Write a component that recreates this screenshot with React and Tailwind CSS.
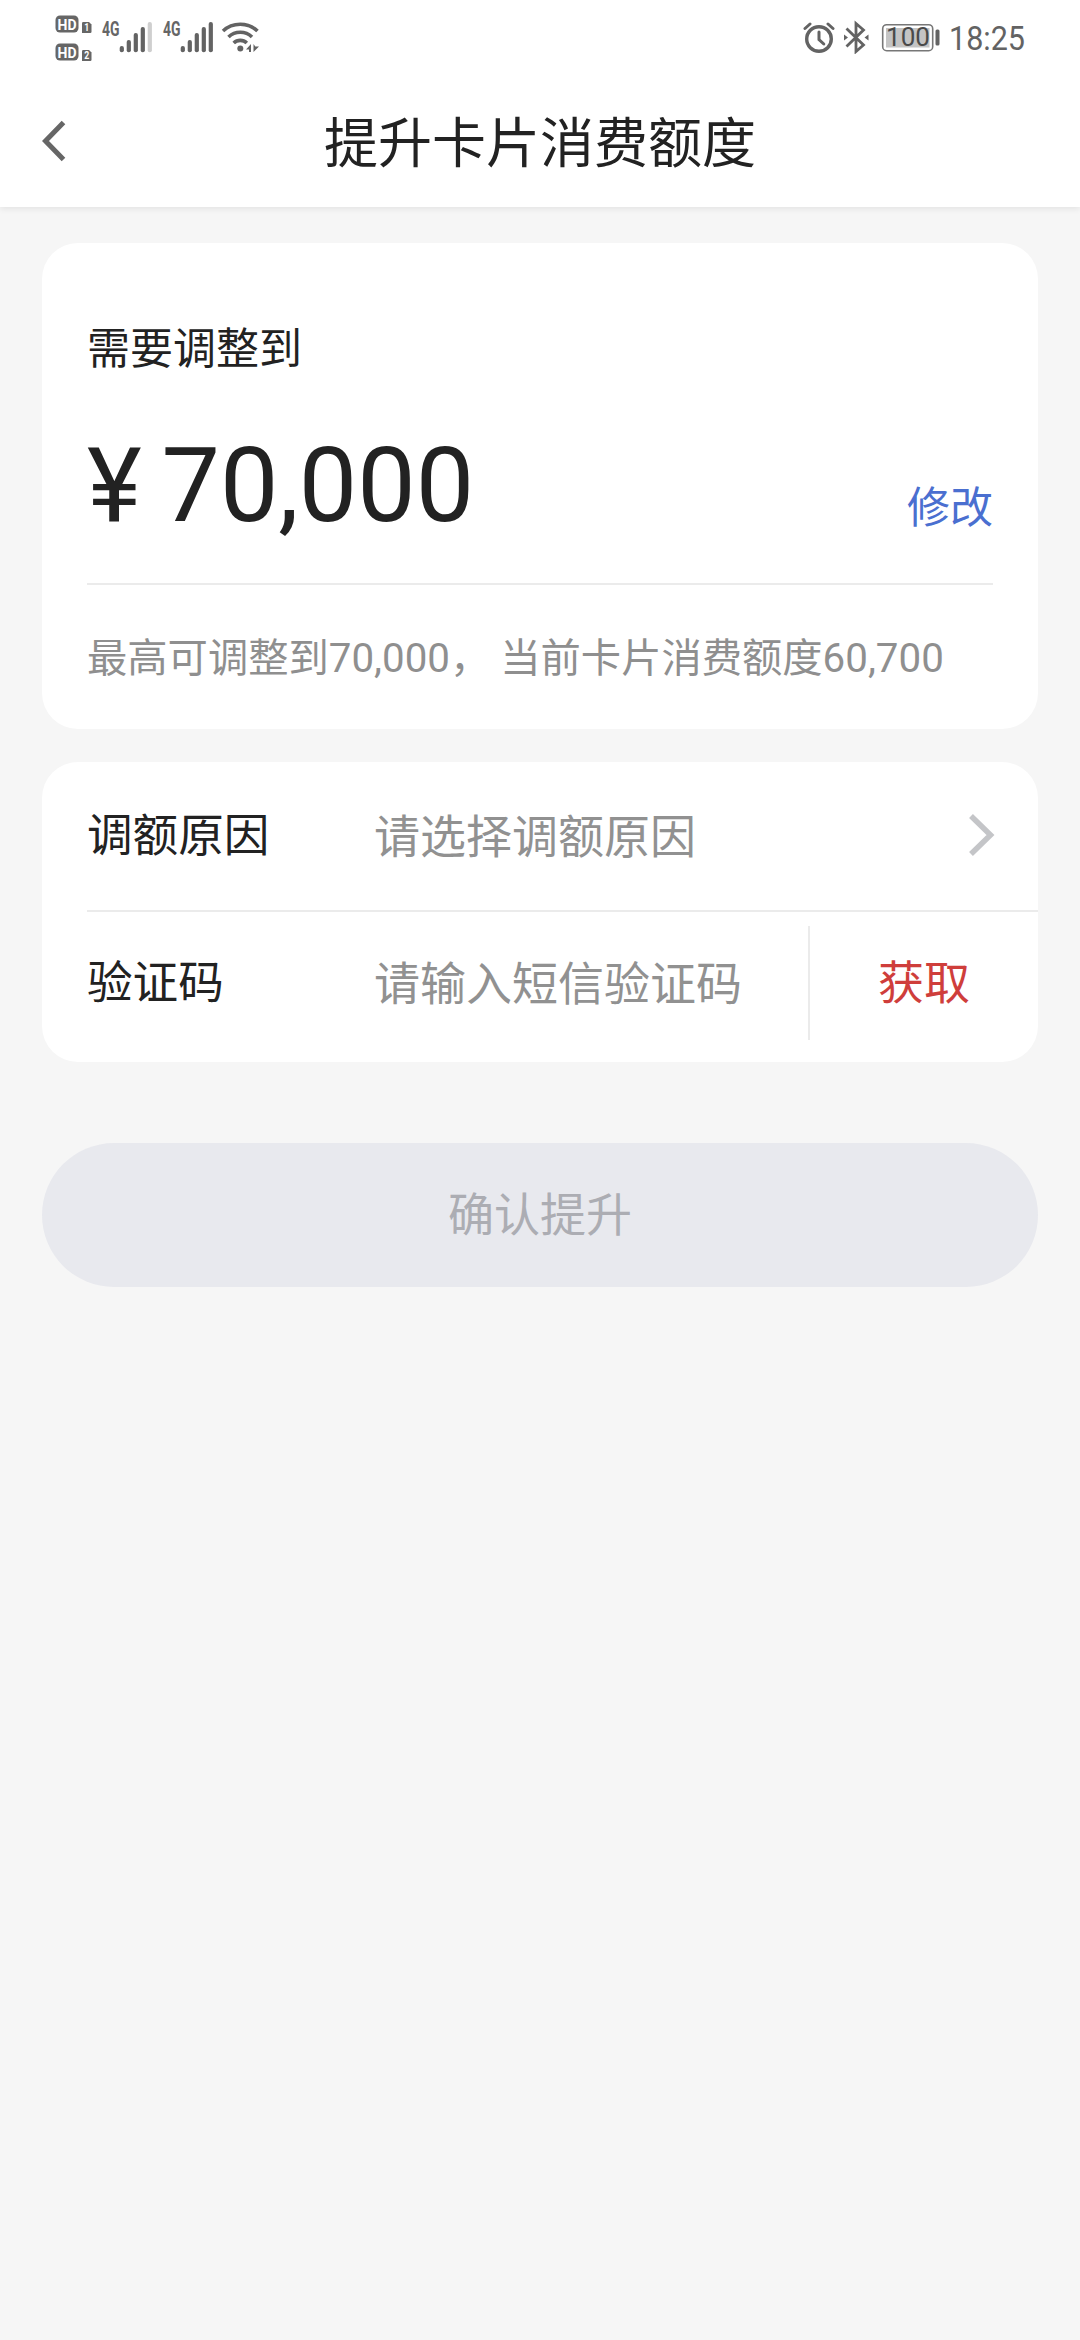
import { useState } from 'react'

const BARS = [
  { x: 2, top: 26 },
  { x: 9, top: 20 },
  { x: 16, top: 13 },
  { x: 23, top: 7 },
  { x: 30, top: 2 },
]

function HdBadge({ sim }) {
  return (
    <svg width="38" height="18" viewBox="0 0 38 18" className="overflow-visible">
      <rect x="0.5" y="0.5" width="23" height="17" rx="4.500" fill="#666" />
      <text x="2.5" y="14.500" fontSize="15.500" fontWeight="700" fill="#fff" textLength="19" lengthAdjust="spacingAndGlyphs">HD</text>
      <path d="M28.200 7h5.800l2.500 2.500v7.300q0 1.200-1.200 1.200h-8.300v-9.800q0-1.200 1.200-1.200z" fill="#666" />
      <text x="29.200" y="16.2" fontSize="10" fontWeight="700" fill="#fff" textLength="5" lengthAdjust="spacingAndGlyphs">{sim}</text>
    </svg>
  )
}

function Signal({ level }) {
  return (
    <svg width="54" height="34" viewBox="0 0 54 34" className="overflow-visible">
      <text x="1" y="16" fontSize="19.500" fontWeight="700" fill="#666" textLength="17.5" lengthAdjust="spacingAndGlyphs">4G</text>
      <g transform="translate(16 0)">
        {BARS.map((b, i) => (
          <rect key={b.x} x={b.x + 0.7} y={b.top} width="4.2" height={32.3 - b.top} rx="2" fill={i < level ? '#636363' : '#cfcfcf'} />
        ))}
      </g>
    </svg>
  )
}

function Wifi() {
  return (
    <svg width="38" height="34" viewBox="0 0 38 34" fill="none" stroke="#636363" strokeWidth="3.600">
      <path d="M2 11c9.500-9 25-9 34.500 0" />
      <path d="M7.500 17c6.500-6.300 17-6.300 23.500 0" />
      <path d="M12.700 23c3.600-3.500 9.500-3.500 13.100 0" />
      <circle cx="19.300" cy="28.600" r="3" fill="#636363" stroke="none" />
      <path d="M25 29.500l5-5.500v8h-2v-2.500zM32.500 32v-8l1.800 2.500h3.700z" fill="#636363" stroke="none" />
    </svg>
  )
}

function Alarm() {
  return (
    <svg width="32" height="34" viewBox="0 0 32 34" fill="none" stroke="#636363">
      <circle cx="16" cy="19" r="12.300" strokeWidth="3.400" />
      <path d="M16 12v7.500l4.800 4.500" strokeWidth="3" strokeLinecap="round" />
      <path d="M2 8.500l5-4.500M30 8.500l-5-4.500" strokeWidth="3" strokeLinecap="round" />
    </svg>
  )
}

function Bluetooth() {
  return (
    <svg width="26" height="34" viewBox="0 0 26 34" fill="none" stroke="#636363" strokeWidth="2.800">
      <path d="M3.500 8.500l17 16.500-7.500 6.500v-28l7.500 6.500-17 16.500" />
      <path d="M1 14.500l4 3-4 3zM25.500 14.500l-4 3 4 3z" fill="#636363" stroke="none" />
    </svg>
  )
}

function Battery() {
  return (
    <svg width="60" height="30" viewBox="0 0 60 30" className="overflow-visible">
      <rect x="1.700" y="1.700" width="50" height="26" rx="4" fill="#fff" stroke="#777" strokeWidth="1.600" />
      <rect x="5" y="5" width="43.500" height="19.500" fill="#c4c4c4" />
      <text x="5" y="22.700" fontSize="25.500" fill="#4a4a4a" textLength="44" lengthAdjust="spacingAndGlyphs">100</text>
      <rect x="54.500" y="6.500" width="4" height="16" rx="1.500" fill="#636363" />
    </svg>
  )
}

function Clock() {
  return (
    <svg width="76" height="34" viewBox="0 0 76 34" className="overflow-visible">
      <text x="0" y="30" fontSize="34" fill="#636363" textLength="76" lengthAdjust="spacingAndGlyphs">18:25</text>
    </svg>
  )
}

function StatusBar() {
  return (
    <div className="flex h-[72px] items-start justify-between pl-[55px] pr-[55px] pt-[15px]">
      <div className="flex">
        <div className="flex flex-col gap-[10px]">
          <HdBadge sim={1} />
          <HdBadge sim={2} />
        </div>
        <div className="flex gap-[7px] pl-[8px] pt-[5px]">
          <Signal level={4} />
          <Signal level={5} />
          <div className="-ml-[2px]"><Wifi /></div>
        </div>
      </div>
      <div className="flex pt-[5px]">
        <Alarm />
        <div className="ml-[8px]"><Bluetooth /></div>
        <div className="ml-[12px] mt-[3px]"><Battery /></div>
        <div className="ml-[8px]"><Clock /></div>
      </div>
    </div>
  )
}

export default function App() {
  const [amount] = useState('70,000')

  return (
    <div lang="zh-CN" className="h-[2340px] w-[1080px] overflow-hidden bg-[#f6f6f6] font-['Roboto','Noto_Sans_CJK_SC',sans-serif] text-[#222]">
      {/* Header */}
      <header className="h-[207px] bg-white shadow-[0_2px_6px_rgba(0,0,0,0.08)]">
        <StatusBar />
        <div className="grid h-[138px] grid-cols-[1fr_auto_1fr] items-center">
          <button className="justify-self-start pl-[42px]">
            <svg width="25" height="42" viewBox="0 0 25 42" fill="none" stroke="#666" strokeWidth="5">
              <path d="M21.500 2.500L3.500 21l18 18.500" />
            </svg>
          </button>
          <h1 className="pt-[8px] text-[54px] leading-[80px]">提升卡片消费额度</h1>
        </div>
      </header>

      <main className="px-[42px] pt-[36px]">
        {/* Amount */}
        <section className="h-[486px] rounded-[36px] bg-white px-[45px] pt-[76px]">
          <p className="text-[43px] leading-[60px]">需要调整到</p>
          <div className="mt-[37px] flex h-[169px] justify-between border-b-2 border-[#ebebeb]">
            <p className="text-[104px] leading-[140px] [word-spacing:-6px]">¥ {amount}</p>
            <button className="mt-[62px] self-start text-[43px] leading-[60px] text-[#4a6fd0]">修改</button>
          </div>
          <p className="mt-[44px] whitespace-pre text-[40.3px] leading-[60px] text-[#8f8f8f]">最高可调整到70,000， 当前卡片消费额度60,700</p>
        </section>

        {/* Reason and SMS code */}
        <section className="mt-[33px] h-[300px] rounded-[36px] bg-white pl-[45px] text-[46px] leading-[66px]">
          <div className="flex h-[150px] items-center border-b-2 border-[#ebebeb] pr-[43px]">
            <span className="w-[287px] pt-[2px] text-[45.6px]">调额原因</span>
            <span className="flex-1 pt-[2px] text-[#919191]">请选择调额原因</span>
            <svg width="27" height="44" viewBox="0 0 27 44" fill="none" stroke="#c4c5c8" strokeWidth="5.500" className="mb-[3px]">
              <path d="M3 3l19.500 19L3 41" />
            </svg>
          </div>
          <div className="flex h-[142px] items-center">
            <span className="w-[287px] pt-[2px] text-[45.6px]">验证码</span>
            <span className="flex-1 pt-[2px] text-[#919191]">请输入短信验证码</span>
            <button className="mt-[14px] h-[114px] w-[230px] self-start border-l-2 border-[#ebebeb] text-[#cf3e3b]">获取</button>
          </div>
        </section>

        <button className="mt-[81px] h-[144px] w-full rounded-full bg-[#e8e9ee] text-[46px] text-[#acadb3]">确认提升</button>
      </main>
    </div>
  )
}
